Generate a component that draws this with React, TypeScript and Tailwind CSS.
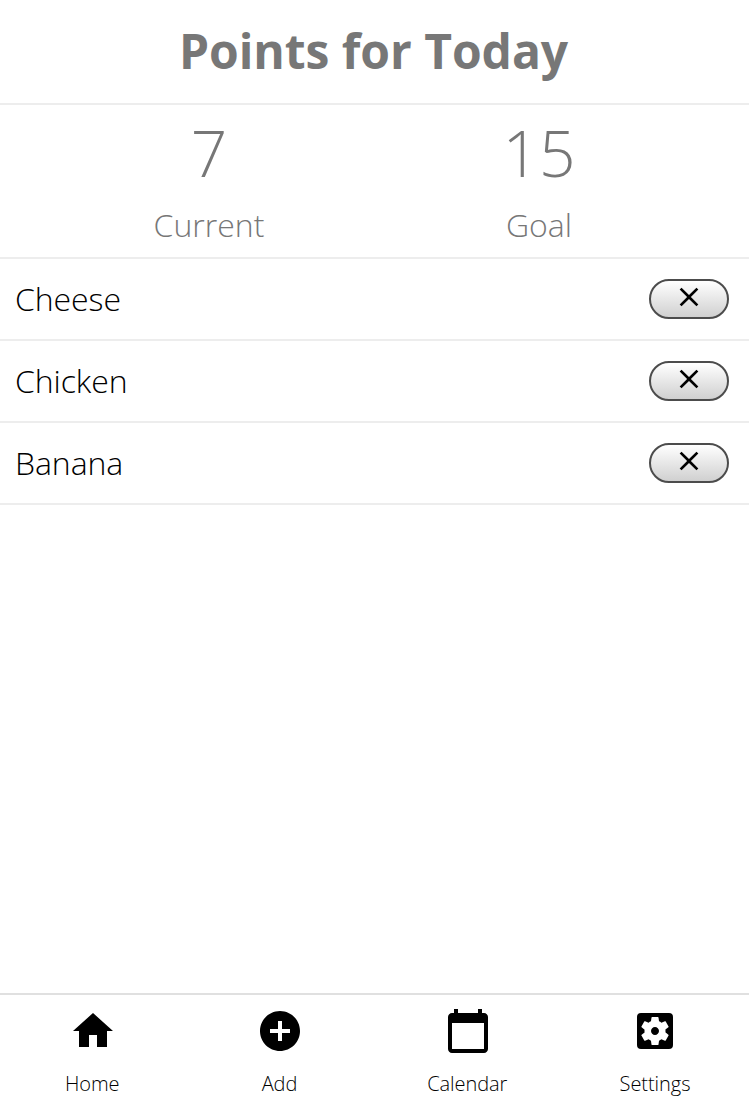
import React from "react";
import { MdHome, MdAddCircle, MdSettingsApplications, MdClose, MdCalendarToday } from "react-icons/md";

const foods = ["Cheese", "Chicken", "Banana"];
const tabs = [
  { label: "Home", Icon: MdHome, nudge: "pr-[1.5px]" },
  { label: "Add", Icon: MdAddCircle, nudge: "pr-px" },
  { label: "Calendar", Icon: MdCalendarToday, nudge: "pr-[1.5px]" },
  { label: "Settings", Icon: MdSettingsApplications, nudge: "pr-0" },
];

function Stat({ value, label }: { value: number; label: string }) {
  return (
    <div className="flex flex-col items-center">
      <div className="h-[88px] text-[64px] leading-[96px]">{value}</div>
      <div className="text-[32px] leading-[64px]">{label}</div>
    </div>
  );
}

export default function App() {
  return (
    <div className="flex h-[1104px] w-[749px] flex-col bg-white font-['Open_Sans',sans-serif] font-light text-black antialiased">
      <header className="flex h-[105px] items-start justify-center border-b-2 border-[#ededed] pr-0.5">
        <h1 className="text-[48px] leading-[102px] font-bold tracking-[-0.05px] text-[#777777]">Points for Today</h1>
      </header>
      <section className="flex h-[154px] justify-center border-b-2 border-[#ededed] pr-px text-[#777777]">
        <div className="flex w-[330px] justify-center"><Stat value={7} label="Current" /></div>
        <div className="flex w-[330px] justify-center"><Stat value={15} label="Goal" /></div>
      </section>
      <ul>
        {foods.map((food) => (
          <li key={food} className="flex h-[82px] items-center justify-between border-b-2 border-[#ededed] pr-5 pl-[15px]">
            <span className="text-[32px] leading-[80px] tracking-[-0.08px]">{food}</span>
            <button aria-label={`Remove ${food}`} className="flex h-10 w-20 justify-center rounded-full border-2 border-[#4c4c4c] bg-linear-to-b from-white to-[#d0d0d0]">
              <MdClose className="size-[32px]" />
            </button>
          </li>
        ))}
      </ul>
      <nav className="mt-auto grid h-[111px] grid-cols-[186px_188px_188px_186px] border-t-2 border-[#e0e0e0]">
        {tabs.map(({ label, Icon, nudge }) => (
          <div key={label} className="flex flex-col items-center pt-3">
            <Icon className="size-12" />
            <span className={`mt-[15px] text-[20px] leading-[27px] tracking-[-0.05px] ${nudge}`}>{label}</span>
          </div>
        ))}
      </nav>
    </div>
  );
}
